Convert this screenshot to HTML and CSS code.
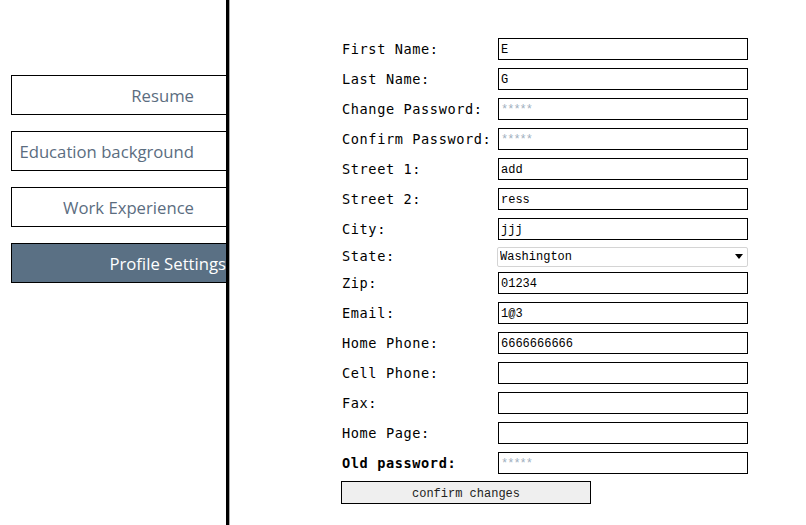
FILE: index.html
```html
<!DOCTYPE html>
<html lang="en">
<head>
<meta charset="utf-8">
<title>Profile Settings</title>
<link rel="stylesheet" href="styles.css">
</head>
<body>
<div class="page">
  <aside class="sidebar">
    <nav class="nav">
      <a class="nav-item">Resume</a>
      <a class="nav-item">Education background</a>
      <a class="nav-item">Work Experience</a>
      <a class="nav-item active">Profile Settings</a>
    </nav>
  </aside>
  <main class="main">
    <form class="form">
      <div class="row"><label class="label">First Name:</label><input class="field" type="text" value="E"></div>
      <div class="row"><label class="label">Last Name:</label><input class="field" type="text" value="G"></div>
      <div class="row"><label class="label">Change Password:</label><input class="field" type="password" placeholder="*****"></div>
      <div class="row"><label class="label">Confirm Password:</label><input class="field" type="password" placeholder="*****"></div>
      <div class="row"><label class="label">Street 1:</label><input class="field" type="text" value="add"></div>
      <div class="row"><label class="label">Street 2:</label><input class="field" type="text" value="ress"></div>
      <div class="row"><label class="label">City:</label><input class="field" type="text" value="jjj"></div>
      <div class="row row-select"><label class="label">State:</label>
        <div class="select-wrap">
          <select class="select"><option>Washington</option></select>
          <svg class="select-arrow" width="8" height="5" viewBox="0 0 8 5"><path d="M0 0H8L4 5Z" fill="#000"/></svg>
        </div>
      </div>
      <div class="row"><label class="label">Zip:</label><input class="field" type="text" value="01234"></div>
      <div class="row"><label class="label">Email:</label><input class="field" type="text" value="1@3"></div>
      <div class="row"><label class="label">Home Phone:</label><input class="field" type="text" value="6666666666"></div>
      <div class="row"><label class="label">Cell Phone:</label><input class="field" type="text"></div>
      <div class="row"><label class="label">Fax:</label><input class="field" type="text"></div>
      <div class="row"><label class="label">Home Page:</label><input class="field" type="text"></div>
      <div class="row"><label class="label label-bold">Old password:</label><input class="field" type="password" placeholder="*****"></div>
      <button class="submit" type="button">confirm changes</button>
    </form>
  </main>
</div>
</body>
</html>
```

FILE: styles.css
```css
html, body {
  margin: 0;
  padding: 0;
  background: #fff;
}

body {
  overflow: hidden;
}

.page {
  display: flex;
  height: 525px;
}

.sidebar {
  flex-shrink: 0;
  width: 226px;
  border-right: 3px solid #000;
  box-shadow: 1px 0 0 #aaa;
  padding-top: 75px;
  box-sizing: content-box;
}

.nav {
  display: flex;
  flex-direction: column;
  gap: 16px;
  padding-left: 11px;
}

.nav-item {
  border: 1px solid #000;
  border-right: none;
  display: flex;
  align-items: center;
  justify-content: flex-end;
  padding-right: 32px;
  padding-top: 1px;
  box-sizing: content-box;
  height: 37px;
  font-family: "Open Sans", "Noto Sans", sans-serif;
  font-size: 16.7px;
  color: #5b6d7f;
  white-space: nowrap;
  cursor: pointer;
}

.nav-item.active {
  background: #5a7084;
  color: #fff;
  padding-right: 0;
}

.main {
  flex: 1;
  padding-left: 113px;
  padding-top: 38px;
}

.form {
  display: flex;
  flex-direction: column;
  gap: 8px;
  width: 410px;
}

.row {
  display: flex;
  align-items: center;
  height: 22px;
}

.row-select {
  height: 16px;
}

.label {
  width: 156px;
  flex-shrink: 0;
  font-family: "DejaVu Sans Mono", monospace;
  font-size: 13.6px;
  letter-spacing: 0.6px;
  color: #000;
}

.label-bold {
  font-weight: bold;
}

.field {
  width: 250px;
  height: 22px;
  box-sizing: border-box;
  border: 1px solid #000;
  border-radius: 0;
  padding: 1px 2px 0;
  margin: 0;
  font-family: "Liberation Mono", monospace;
  font-size: 12px;
  color: #000;
  outline: none;
}

.field::placeholder {
  color: #9fb0c0;
  letter-spacing: -1px;
}

.select-wrap {
  position: relative;
  width: 251px;
  height: 20px;
  margin-left: -1px;
}

.select {
  appearance: none;
  -webkit-appearance: none;
  width: 100%;
  height: 20px;
  box-sizing: border-box;
  border: 1px solid #d4d4d4;
  border-radius: 2px;
  background: #fff;
  padding: 1px 2px 0;
  margin: 0;
  font-family: "Liberation Mono", monospace;
  font-size: 12px;
  color: #000;
  outline: none;
}

.select-arrow {
  position: absolute;
  right: 5px;
  top: 8px;
  pointer-events: none;
}

.submit {
  width: 250px;
  height: 23px;
  margin: -1px 0 0 -1px;
  border: 1px solid #000;
  border-radius: 0;
  background: #efefef;
  font-family: "Liberation Mono", monospace;
  font-size: 12px;
  color: #222;
  padding: 2px 0 0;
}
```
